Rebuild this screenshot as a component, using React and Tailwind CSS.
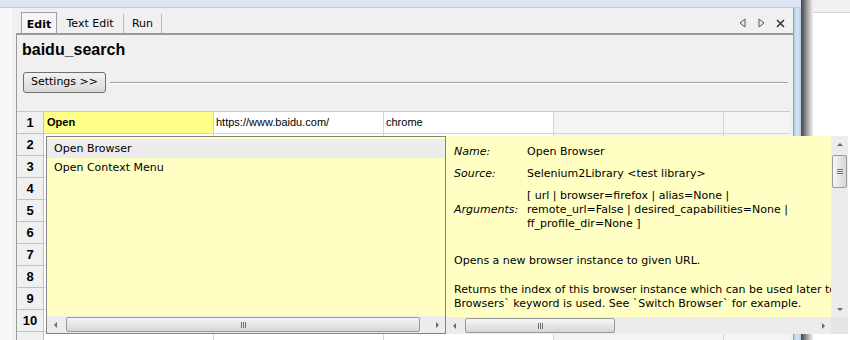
import React from 'react'

// petites flèches des barres de défilement
function Arrow({ dir }) {
  const d = {
    left: 'M5 1 L2 4 L5 7 Z',
    right: 'M3 1 L6 4 L3 7 Z',
    up: 'M1 5 L4 2 L7 5 Z',
    down: 'M1 3 L4 6 L7 3 Z',
  }[dir]
  return (
    <svg width='8' height='8' viewBox='0 0 8 8'>
      <path d={d} fill='#6a6a6a' />
    </svg>
  )
}

function Grip({ vertical }) {
  if (vertical) {
    return (
      <div className='flex flex-col gap-[1px] items-center'>
        <div className='w-[6px] h-[1px] bg-[#707070]' />
        <div className='w-[6px] h-[1px] bg-[#707070]' />
        <div className='w-[6px] h-[1px] bg-[#707070]' />
      </div>
    )
  }
  return (
    <div className='flex gap-[1px] items-center'>
      <div className='w-[1px] h-[6px] bg-[#707070]' />
      <div className='w-[1px] h-[6px] bg-[#707070]' />
      <div className='w-[1px] h-[6px] bg-[#707070]' />
    </div>
  )
}

function HScroll({ thumb }) {
  return (
    <div className='flex h-[17px] bg-[#ececec] shrink-0'>
      <div className='w-[17px] flex items-center justify-center'><Arrow dir='left' /></div>
      <div className='flex-1 flex items-center'>
        <div className={'h-[15px] rounded-[2px] border border-[#9a9a9a] bg-linear-to-b from-[#f6f6f6] to-[#d6d6d6] flex items-center justify-center ' + thumb}>
          <Grip />
        </div>
      </div>
      <div className='w-[17px] flex items-center justify-center'><Arrow dir='right' /></div>
    </div>
  )
}

function VScroll() {
  return (
    <div className='w-[17px] flex flex-col bg-[#ececec] shrink-0'>
      <div className='h-[17px] flex items-center justify-center'><Arrow dir='up' /></div>
      <div className='flex-1 flex flex-col items-center'>
        <div className='mt-[2px] w-[15px] h-[33px] rounded-[2px] border border-[#9a9a9a] bg-linear-to-r from-[#f6f6f6] to-[#d6d6d6] flex items-center justify-center'>
          <Grip vertical />
        </div>
      </div>
      <div className='h-[17px] flex items-center justify-center'><Arrow dir='down' /></div>
    </div>
  )
}

const lignes = [1, 2, 3, 4, 5, 6, 7, 8, 9, 10, 11]

function App() {
  return (
    <div className="w-[850px] h-[340px] overflow-hidden relative bg-white flex font-['DejaVu_Sans',sans-serif] text-[11px] text-black">

      {/* FENETRE PRINCIPALE */}
      <div className='w-[801px] flex flex-col shrink-0'>
        <div className='h-[8px] bg-[#dce4f1] border-b border-[#c4cad4] shrink-0' />
        <div className='flex-1 flex min-h-0'>
          <div className='w-[12px] bg-[#f8f8f8]' />

          <div className='flex-1 flex flex-col bg-[#f0f0f0] pl-[4px] min-w-0'>
            {/* ONGLETS */}
            <div className='h-[25px] flex items-end shrink-0 leading-[14px]'>
              <div className='ml-[5px] h-[21px] w-[36px] border-l border-t border-r border-[#a0a0a0] bg-[#f5f5f5] flex items-center justify-center pt-[3px] font-bold'>Edit</div>
              <div className='h-[19px] w-[67px] border-r border-[#b8b8b8] flex items-center justify-center pt-[1px]'>Text Edit</div>
              <div className='h-[19px] w-[38px] border-r border-[#b8b8b8] flex items-center justify-center pt-[1px]'>Run</div>
              <div className='flex-1' />
              <div className='h-[25px] flex items-center gap-[10px] pr-[8px] pt-[5px]'>
                <svg width='9' height='10' viewBox='0 0 9 10'><path d='M7 1 L2 5 L7 9 Z' fill='none' stroke='#555' /></svg>
                <svg width='9' height='10' viewBox='0 0 9 10'><path d='M2 1 L7 5 L2 9 Z' fill='none' stroke='#555' /></svg>
                <svg width='9' height='9' viewBox='0 0 9 9'><path d='M1 1 L8 8 M8 1 L1 8' stroke='#333' strokeWidth='1.5' /></svg>
              </div>
            </div>

            {/* PANNEAU */}
            <div className='flex-1 border-t-2 border-l border-[#999999] flex flex-col overflow-hidden'>
              <h1 className="mt-[6px] ml-[5px] font-['Liberation_Sans',Arial,sans-serif] font-bold text-[16px] leading-[18px]">baidu_search</h1>

              <div className='mt-[13px] flex items-center'>
                <button className='ml-[6px] w-[83px] h-[21px] rounded-[3px] border border-[#707070] bg-linear-to-b from-[#f2f2f2] to-[#d9d9d9] text-[11px]'>Settings &gt;&gt;</button>
                <div className='ml-[4px] mr-[5px] flex-1 border-t border-b border-t-[#a0a0a0] border-b-white' />
              </div>

              {/* GRILLE */}
              <div className='mt-[18px] w-[773px] border-t border-[#c8c8c8]'>
                {lignes.map((n) => (
                  <div key={n} className='flex h-[22px]'>
                    <div className="w-[27px] bg-[#f0f0f0] border-r border-b border-[#c0c0c0] flex items-center justify-center pt-[1px] font-['Liberation_Sans',Arial,sans-serif] font-bold text-[13px]">{n < 11 ? n : ''}</div>
                    <div className={"w-[170px] border-r border-b border-[#d4d4d4] flex items-center pl-[3px] font-['Liberation_Sans',Arial,sans-serif] font-bold " + (n === 1 ? 'bg-[#ffff88]' : 'bg-white')}>{n === 1 ? 'Open' : ''}</div>
                    <div className="w-[170px] border-r border-b border-[#d4d4d4] bg-white flex items-center pl-[2px] font-['Liberation_Sans',Arial,sans-serif]">{n === 1 ? 'https://www.baidu.com/' : ''}</div>
                    <div className="w-[170px] border-r border-b border-[#d4d4d4] bg-white flex items-center pl-[2px] font-['Liberation_Sans',Arial,sans-serif]">{n === 1 ? 'chrome' : ''}</div>
                    <div className='w-[170px] border-r border-b border-[#d4d4d4] bg-[#f4f4f4]' />
                    <div className='flex-1 border-b border-[#d4d4d4] bg-[#f4f4f4]' />
                  </div>
                ))}
              </div>
            </div>
          </div>

          <div className='w-[8px] bg-linear-to-r from-[#b9cde6] via-[#d4e3f5] to-[#b9cde6] border-l border-[#8ea3bf]' />
        </div>
      </div>

      {/* OMBRE ET FOND A DROITE */}
      <div className='w-[12px] bg-linear-to-r from-[#444444] via-[#a0a0a0] to-[#f0f0f0] shrink-0' />
      <div className='flex-1 flex flex-col'>
        <div className='h-[13px] bg-[#f0f0f0] border-b border-[#d4d4d4]' />
        <div className='flex-1 bg-white' />
      </div>

      {/* POPUP D'AUTOCOMPLETION */}
      <div className='absolute left-[46px] top-[136px] w-[802px] h-[198px] flex'>
        <div className='w-[400px] border border-[#828282] bg-[#ffffc4] flex flex-col'>
          <div className='mt-[2px] h-[19px] bg-[#ececec] flex items-center pl-[7px] pt-[2px]'>Open Browser</div>
          <div className='h-[18px] flex items-center pl-[7px] pt-[2px]'>Open Context Menu</div>
          <div className='flex-1' />
          <HScroll thumb='ml-[2px] w-[354px]' />
        </div>

        <div className='flex-1 flex flex-col min-w-0'>
          <div className='flex-1 flex min-h-0'>
            <div className='flex-1 bg-[#ffffc4] pl-[8px] pt-[9px] overflow-hidden whitespace-nowrap leading-[14px]'>
              <div className='grid grid-cols-[73px_1fr] gap-y-[8px]'>
                <div className='italic'>Name:</div>
                <div>Open Browser</div>
                <div className='italic'>Source:</div>
                <div>Selenium2Library &lt;test library&gt;</div>
                <div className='italic self-center'>Arguments:</div>
                <div>
                  [ url | browser=firefox | alias=None |<br />
                  remote_url=False | desired_capabilities=None |<br />
                  ff_profile_dir=None ]
                </div>
              </div>
              <p className='mt-[23px]'>Opens a new browser instance to given URL.</p>
              <p className='mt-[15px]'>Returns the index of this browser instance which can be used later to switch back to it. Index starts from 1 and is reset</p>
              <p>Browsers` keyword is used. See `Switch Browser` for example.</p>
            </div>
            <VScroll />
          </div>
          <div className='flex'>
            <div className='flex-1 min-w-0'><HScroll thumb='ml-[2px] w-[150px]' /></div>
            <div className='w-[17px] h-[17px] bg-[#e4e4e4]' />
          </div>
        </div>
      </div>
    </div>
  )
}

export default App
